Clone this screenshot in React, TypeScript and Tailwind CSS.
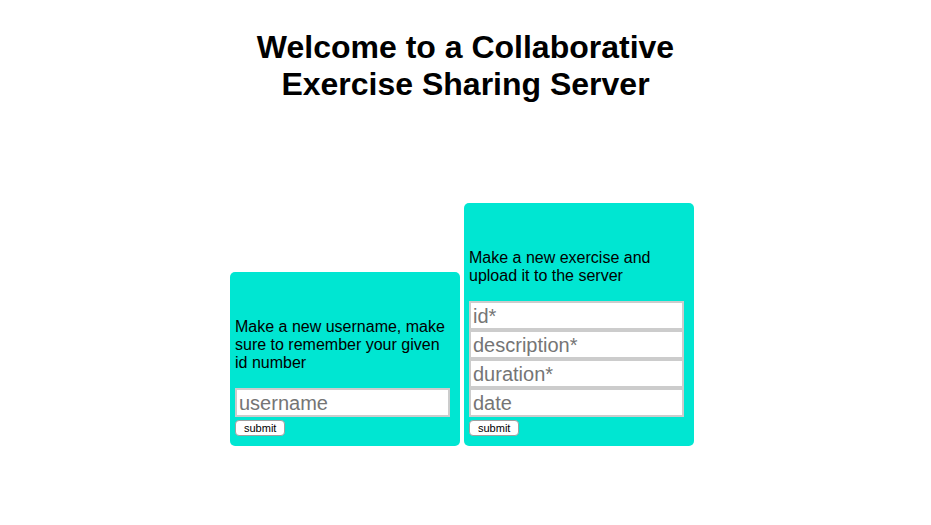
export default function App() {
  return (
    <div className="min-h-[525px] bg-white text-black" style={{ fontFamily: '"Liberation Sans", Arial, sans-serif' }}>
      <h1 className="mx-auto w-[450px] pt-[29px] text-center text-[32px] font-bold leading-[37px]">
        Welcome to a Collaborative Exercise Sharing Server
      </h1>

      <div className="mt-[100px] flex items-end justify-center gap-[4px] pr-[7px]">
        <div className="w-[230px] rounded-[5px] bg-[#00e6d2] px-[5px] pt-[46px] pb-[10px]">
          <p className="mb-[16px] text-[16px] leading-[18px]">
            Make a new username, make sure to remember your given id number
          </p>
          <input
            placeholder="username"
            className="block h-[29px] w-[215px] border-2 border-[#cccccc] bg-white px-[2px] text-[20px] placeholder:text-[#757575]"
          />
          <button className="mt-[3px] block h-[16px] rounded-[4px] border border-[#a0a0a0] bg-white px-[8px] text-[11px] leading-[14px]">
            submit
          </button>
        </div>

        <div className="w-[230px] rounded-[5px] bg-[#00e6d2] px-[5px] pt-[46px] pb-[10px]">
          <p className="mb-[16px] text-[16px] leading-[18px]">
            Make a new exercise and upload it to the server
          </p>
          {["id*", "description*", "duration*", "date"].map((ph) => (
            <input
              key={ph}
              placeholder={ph}
              className="block h-[29px] w-[215px] border-2 border-[#cccccc] bg-white px-[2px] text-[20px] placeholder:text-[#757575]"
            />
          ))}
          <button className="mt-[3px] block h-[16px] rounded-[4px] border border-[#a0a0a0] bg-white px-[8px] text-[11px] leading-[14px]">
            submit
          </button>
        </div>
      </div>
    </div>
  );
}
